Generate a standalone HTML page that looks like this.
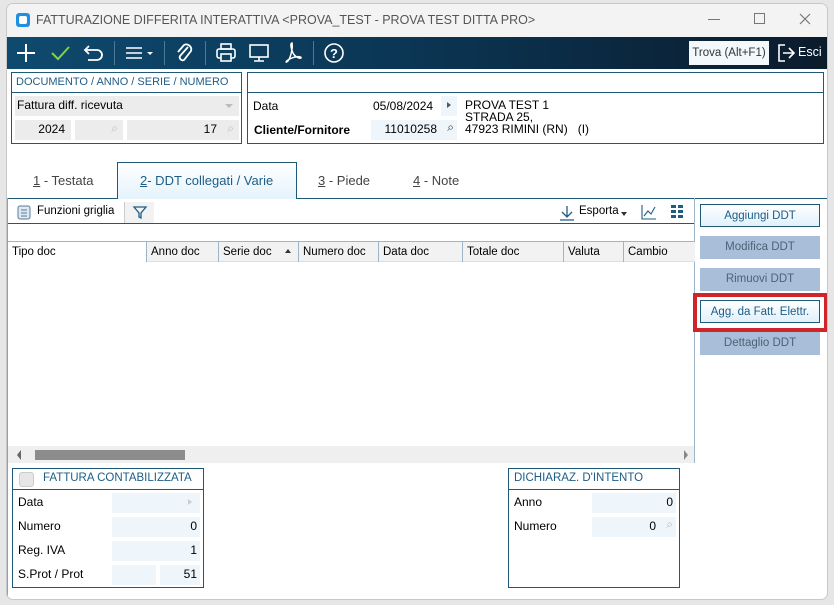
<!DOCTYPE html>
<html><head><meta charset="utf-8"><style>
*{box-sizing:border-box;margin:0;padding:0}
body{width:834px;height:605px;background:#e6e6e6;font-family:"Liberation Sans",sans-serif;font-size:12px;color:#000;position:relative;overflow:hidden}
.a{position:absolute;white-space:nowrap}
.win{left:6px;top:3px;width:822px;height:597px;background:#fff;border:1px solid #c8c8c8;border-radius:7px;overflow:hidden}
.title{left:0;top:0;width:822px;height:33px;background:#f3f3f3}
.tb{left:0;top:33px;width:822px;height:32px;background:linear-gradient(90deg,#0e4a6f,#0b3553 50%,#0b1b2c)}
.box{border:1px solid #1e5a78}
.hdr{color:#1d5d86;font-size:11.5px}
.fld{background:#ececec}
.fb{background:#eef6fc}
.btn{width:120px;height:23px;text-align:center;line-height:23px;font-size:11.5px}
.dis{background:#a9bfd9;color:#4e6275}
.sep{width:1px;height:24px;background:#4c7a96;top:4px}
.th{top:0;height:20px;line-height:20px;border-right:1px solid #9eb4c8;padding-left:4px;font-size:11.5px}
</style></head><body>
<div class="a win">
 <div class="a title">
  <div class="a" style="left:9px;top:9px;width:14px;height:14px;background:#1f8fe0;border-radius:3px"><div class="a" style="left:3px;top:3px;width:8px;height:8px;background:#fff;border-radius:2px"></div></div>
  <div class="a" style="left:29px;top:9px;color:#555;font-size:12.5px">FATTURAZIONE DIFFERITA INTERATTIVA &lt;PROVA_TEST - PROVA TEST DITTA PRO&gt;</div>
  <div class="a" style="left:701px;top:15px;width:12px;height:1px;background:#777"></div>
  <div class="a" style="left:747px;top:9px;width:11px;height:11px;border:1px solid #777"></div>
  <svg class="a" style="left:792px;top:9px" width="12" height="12"><path d="M1 1L11 11M11 1L1 11" stroke="#777" stroke-width="1.2"/></svg>
 </div>
 <div class="a tb">
  <svg class="a" style="left:8px;top:5px" width="22" height="22"><path d="M11 2V20M2 11H20" stroke="#fff" stroke-width="2"/></svg>
  <svg class="a" style="left:42px;top:6px" width="22" height="20"><path d="M3 10L9 16L20 4" stroke="#7ed34a" stroke-width="2" fill="none"/></svg>
  <svg class="a" style="left:76px;top:5px" width="22" height="22"><path d="M6 4L2 8L6 12M2 8H14A5 5 0 0 1 14 18H5" stroke="#fff" stroke-width="1.8" fill="none"/></svg>
  <div class="a sep" style="left:107px"></div>
  <svg class="a" style="left:117px;top:6px" width="32" height="20"><path d="M2 5H18M2 10H18M2 15H18" stroke="#fff" stroke-width="1.6"/><path d="M23 9H29L26 12Z" fill="#fff"/></svg>
  <div class="a sep" style="left:157px"></div>
  <svg class="a" style="left:167px;top:5px" width="22" height="22"><path d="M14 5L6 14A3 3 0 0 0 10 18L17 9A5 5 0 0 0 10 3L4 10" stroke="#fff" stroke-width="1.8" fill="none"/></svg>
  <div class="a sep" style="left:198px"></div>
  <svg class="a" style="left:208px;top:5px" width="22" height="22"><rect x="6" y="2" width="10" height="5" stroke="#fff" stroke-width="1.6" fill="none"/><rect x="2" y="7" width="18" height="9" rx="2" stroke="#fff" stroke-width="1.6" fill="none"/><rect x="6" y="12" width="10" height="7" stroke="#fff" stroke-width="1.6" fill="#0d4466"/></svg>
  <svg class="a" style="left:241px;top:5px" width="22" height="22"><rect x="2" y="3" width="18" height="12" stroke="#fff" stroke-width="1.6" fill="none"/><path d="M11 15V19M6 19H16" stroke="#fff" stroke-width="1.6"/></svg>
  <svg class="a" style="left:275px;top:4px" width="22" height="24"><path d="M10 2C8 2 9 8 11 12C13 16 18 18 19 17C20 15 12 15 6 19C3 21 4 22 6 20C9 16 11 6 10 2Z" stroke="#fff" stroke-width="1.5" fill="none"/></svg>
  <div class="a sep" style="left:306px"></div>
  <svg class="a" style="left:315px;top:4px" width="24" height="24"><circle cx="12" cy="12" r="9" stroke="#fff" stroke-width="1.6" fill="none"/><text x="12" y="17" fill="#fff" font-size="13" font-weight="bold" text-anchor="middle" font-family="Liberation Sans">?</text></svg>
  <div class="a" style="left:682px;top:4px;width:80px;height:24px;background:#f3f8fc;color:#333;line-height:24px;text-align:center;font-size:11.5px">Trova (Alt+F1)</div>
  <svg class="a" style="left:770px;top:6px" width="20" height="20"><path d="M8 2H2V18H8" stroke="#fff" stroke-width="1.6" fill="none"/><path d="M6 10H17M12 5L17 10L12 15" stroke="#fff" stroke-width="1.6" fill="none"/></svg>
  <div class="a" style="left:791px;top:8px;color:#fff;font-size:12.5px">Esci</div>
 </div>

 <!-- doc box -->
 <div class="a box" style="left:4px;top:68px;width:231px;height:72px">
  <div class="a hdr" style="left:4px;top:3px;font-size:11px">DOCUMENTO / ANNO / SERIE / NUMERO</div>
  <div class="a" style="left:0;top:19px;width:229px;height:1px;background:#1e5a78"></div>
  <div class="a fld" style="left:3px;top:23px;width:224px;height:20px"><span class="a" style="left:2px;top:2px">Fattura diff. ricevuta</span><span class="a" style="right:6px;top:8px;border:4px solid transparent;border-top-color:#bbb"></span></div>
  <div class="a fld" style="left:3px;top:47px;width:56px;height:20px"><span class="a" style="right:6px;top:2px">2024</span></div>
  <div class="a fld" style="left:63px;top:47px;width:48px;height:20px"><span class="a" style="right:5px;top:1px;color:#bbb">&#x2315;</span></div>
  <div class="a fld" style="left:115px;top:47px;width:112px;height:20px"><span class="a" style="right:22px;top:2px">17</span><span class="a" style="right:5px;top:1px;color:#bbb">&#x2315;</span></div>
 </div>
 <!-- client box -->
 <div class="a box" style="left:240px;top:68px;width:577px;height:72px">
  <div class="a" style="left:0;top:19px;width:575px;height:1px;background:#1e5a78"></div>
  <div class="a" style="left:5px;top:26px">Data</div>
  <div class="a" style="left:125px;top:26px">05/08/2024</div>
  <div class="a fb" style="left:193px;top:23px;width:16px;height:20px"><span class="a" style="left:6px;top:6px;border:3px solid transparent;border-left:4px solid #555"></span></div>
  <div class="a" style="left:217px;top:26px;line-height:12px">PROVA TEST 1<br>STRADA 25,<br>47923 RIMINI (RN) &nbsp;&nbsp;(I)</div>
  <div class="a" style="left:6px;top:50px;font-weight:bold">Cliente/Fornitore</div>
  <div class="a fb" style="left:123px;top:47px;width:86px;height:20px"><span class="a" style="right:20px;top:2px">11010258</span><span class="a" style="right:3px;top:0px;color:#333">&#x2315;</span></div>
 </div>

 <!-- tabs -->
 <div class="a" style="left:0;top:194px;width:822px;height:1px;background:#1e5a78"></div>
 <div class="a" style="left:0;top:194px;width:1px;height:400px;background:#8aa3b8"></div>
 <div class="a" style="left:26px;top:169px;color:#444;font-size:13px"><u>1</u> - Testata</div>
 <div class="a" style="left:110px;top:158px;width:180px;height:37px;border:1px solid #1e5a78;border-bottom:none;background:linear-gradient(#fff,#e4f3fb)"><div class="a" style="left:22px;top:10px;color:#1d5d86;font-size:13px"><u>2</u>- DDT collegati / Varie</div></div>
 <div class="a" style="left:311px;top:169px;color:#444;font-size:13px"><u>3</u> - Piede</div>
 <div class="a" style="left:406px;top:169px;color:#444;font-size:13px"><u>4</u> - Note</div>

 <!-- grid toolbar -->
 <svg class="a" style="left:10px;top:201px" width="14" height="15"><rect x="1" y="1" width="12" height="13" rx="2" fill="#dfe9f3" stroke="#5a7a96"/><path d="M4 5H10M4 8H10M4 11H10" stroke="#5a7a96"/></svg>
 <div class="a" style="left:30px;top:201px;font-size:11.5px">Funzioni griglia</div>
 <div class="a" style="left:117px;top:198px;width:30px;height:21px;background:#f2f2f2;border-left:1px solid #ccc"><svg class="a" style="left:7px;top:3px" width="16" height="15"><path d="M2 2H14L9 8V13L7 12V8Z" stroke="#1d5d86" stroke-width="1.3" fill="none"/></svg></div>
 <div class="a" style="left:1px;top:219px;width:687px;height:1px;background:#1e5a78"></div>
 <div class="a" style="left:687px;top:194px;width:1px;height:265px;background:#9eb4c8"></div>
 <svg class="a" style="left:552px;top:201px" width="16" height="16"><path d="M8 1V11M3 7L8 12L13 7M1 15H15" stroke="#1d5d86" stroke-width="1.3" fill="none"/></svg>
 <div class="a" style="left:572px;top:201px;font-size:11.5px">Esporta</div>
 <div class="a" style="left:614px;top:208px;border:3px solid transparent;border-top:4px solid #333"></div>
 <svg class="a" style="left:634px;top:200px" width="16" height="16"><path d="M1 1V15H15M3 12L7 7L10 10L14 3" stroke="#1d5d86" stroke-width="1.1" fill="none"/></svg>
 <svg class="a" style="left:664px;top:201px" width="13" height="13"><rect x="0" y="0" width="5" height="3" fill="#1d5d86"/><rect x="7" y="0" width="5" height="3" fill="#1d5d86"/><rect x="0" y="5" width="5" height="3" fill="#1d5d86"/><rect x="7" y="5" width="5" height="3" fill="#1d5d86"/><rect x="0" y="10" width="5" height="3" fill="#1d5d86"/><rect x="7" y="10" width="5" height="3" fill="#1d5d86"/></svg>

 <!-- grid -->
 <div class="a" style="left:1px;top:237px;width:687px;height:222px;border-top:1px solid #9eb4c8;border-bottom:1px solid #9eb4c8">
  <div class="a" style="left:0;top:0;width:687px;height:20px;background:#f2f2f2;border-bottom:1px solid #dde"></div>
  <div class="a th" style="left:0;width:139px;background:#fff">Tipo doc</div>
  <div class="a th" style="left:139px;width:72px">Anno doc</div>
  <div class="a th" style="left:211px;width:80px">Serie doc<span class="a" style="left:66px;top:7px;border:3px solid transparent;border-bottom:4px solid #333;border-top:none"></span></div>
  <div class="a th" style="left:291px;width:80px">Numero doc</div>
  <div class="a th" style="left:371px;width:84px">Data doc</div>
  <div class="a th" style="left:455px;width:101px">Totale doc</div>
  <div class="a th" style="left:556px;width:60px">Valuta</div>
  <div class="a th" style="left:616px;width:71px;border:none">Cambio</div>
  <div class="a" style="left:0;top:204px;width:686px;height:17px;background:#efefef"></div>
  <div class="a" style="left:27px;top:208px;width:150px;height:10px;background:#8c8c8c"></div>
  <div class="a" style="left:9px;top:208px;border:5px solid transparent;border-right:4px solid #666;border-left:none"></div>
  <div class="a" style="left:676px;top:208px;border:5px solid transparent;border-left:4px solid #888;border-right:none"></div>
 </div>

 <!-- right buttons -->
 <div class="a btn" style="left:693px;top:200px;border:1px solid #1e5a78;background:linear-gradient(#fff,#e0f0fa);color:#1d5d86">Aggiungi DDT</div>
 <div class="a btn dis" style="left:693px;top:232px">Modifica DDT</div>
 <div class="a btn dis" style="left:693px;top:264px">Rimuovi DDT</div>
 <div class="a" style="left:686px;top:289px;width:135px;height:39px;border:4px solid #d0232a"></div>
 <div class="a btn" style="left:693px;top:296px;border:1px solid #1e5a78;background:linear-gradient(#fff,#e0f0fa);color:#1d5d86">Agg. da Fatt. Elettr.</div>
 <div class="a btn dis" style="left:693px;top:328px">Dettaglio DDT</div>

 <!-- fattura box -->
 <div class="a box" style="left:5px;top:464px;width:192px;height:120px">
  <div class="a" style="left:6px;top:3px;width:15px;height:15px;background:#e6e6e6;border:1px solid #ccc;border-radius:3px"></div>
  <div class="a hdr" style="left:30px;top:3px">FATTURA CONTABILIZZATA</div>
  <div class="a" style="left:0;top:20px;width:190px;height:1px;background:#1e5a78"></div>
  <div class="a" style="left:5px;top:26px">Data</div>
  <div class="a fb" style="left:99px;top:24px;width:88px;height:20px"><span class="a" style="right:5px;top:6px;border:3px solid transparent;border-left:4px solid #ccc"></span></div>
  <div class="a" style="left:5px;top:50px">Numero</div>
  <div class="a fb" style="left:99px;top:48px;width:88px;height:20px"><span class="a" style="right:3px;top:2px">0</span></div>
  <div class="a" style="left:5px;top:74px">Reg. IVA</div>
  <div class="a fb" style="left:99px;top:72px;width:88px;height:20px"><span class="a" style="right:3px;top:2px">1</span></div>
  <div class="a" style="left:5px;top:98px">S.Prot / Prot</div>
  <div class="a fb" style="left:99px;top:96px;width:44px;height:20px"></div>
  <div class="a fb" style="left:147px;top:96px;width:40px;height:20px"><span class="a" style="right:3px;top:2px">51</span></div>
 </div>
 <!-- dichiaraz box -->
 <div class="a box" style="left:501px;top:464px;width:172px;height:120px">
  <div class="a hdr" style="left:5px;top:3px">DICHIARAZ. D'INTENTO</div>
  <div class="a" style="left:0;top:20px;width:170px;height:1px;background:#1e5a78"></div>
  <div class="a" style="left:5px;top:26px">Anno</div>
  <div class="a fb" style="left:83px;top:24px;width:84px;height:20px"><span class="a" style="right:3px;top:2px">0</span></div>
  <div class="a" style="left:5px;top:50px">Numero</div>
  <div class="a fb" style="left:83px;top:48px;width:84px;height:20px"><span class="a" style="right:20px;top:2px">0</span><span class="a" style="right:3px;top:0px;color:#bbb">&#x2315;</span></div>
 </div>
</div>
</body></html>
